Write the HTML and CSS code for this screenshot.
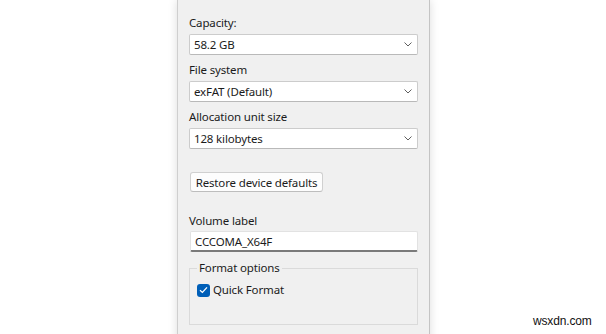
FILE: index.html
```html
<!DOCTYPE html>
<html>
<head>
  <title>Format USB Drive</title>
  <meta charset="UTF-8" />
  <meta name="viewport" content="width=device-width, initial-scale=1.0" />
  <link rel="stylesheet" href="styles.css">
</head>
<body>

  <div class="format-window">
    <div class="field">
      <label class="field-label">Capacity:</label>
      <div class="dropdown">
        <span>58.2 GB</span>
        <svg class="chevron" width="8" height="5" viewBox="0 0 8 5"><path d="M0.5 0.5 L4 4 L7.5 0.5" /></svg>
      </div>
    </div>

    <div class="field">
      <label class="field-label">File system</label>
      <div class="dropdown">
        <span>exFAT (Default)</span>
        <svg class="chevron" width="8" height="5" viewBox="0 0 8 5"><path d="M0.5 0.5 L4 4 L7.5 0.5" /></svg>
      </div>
    </div>

    <div class="field">
      <label class="field-label">Allocation unit size</label>
      <div class="dropdown">
        <span>128 kilobytes</span>
        <svg class="chevron" width="8" height="5" viewBox="0 0 8 5"><path d="M0.5 0.5 L4 4 L7.5 0.5" /></svg>
      </div>
    </div>

    <button class="restore-button">Restore device defaults</button>

    <label class="field-label volume-label" for="volume">Volume label</label>
    <input type="text" id="volume" class="volume-input" value="CCCOMA_X64F">

    <fieldset class="options-group">
      <legend>Format options</legend>
      <label class="check-row">
        <span class="checkbox">
          <svg width="9" height="8" viewBox="0 0 9 8"><path d="M1 4.2 L3.4 6.4 L8 1.4" /></svg>
        </span>
        Quick Format
      </label>
    </fieldset>
  </div>

  <div class="watermark">wsxdn.com</div>

</body>
</html>
```

FILE: styles.css
```css
body {
  margin: 0;
  height: 334px;
  overflow: hidden;
  background-color: #ffffff;
  display: flex;
  justify-content: center;
  font-family: "Noto Sans", "Open Sans", sans-serif;
  font-size: 11.5px;
  letter-spacing: -0.15px;
  color: #1b1b1b;
}

.format-window {
  width: 229px;
  height: 400px;
  padding: 15px 11px 0 11px;
  margin-left: 1px;
  background-color: #f0f0f0;
  border-left: 1px solid #cfcfcf;
  border-right: 1px solid #c4c4c4;
  box-shadow: 0 0 9px rgba(0, 0, 0, 0.14);
  display: flex;
  flex-direction: column;
}

.field {
  display: flex;
  flex-direction: column;
  margin-bottom: 7px;
}

.field-label {
  line-height: 16px;
  height: 16px;
  margin-bottom: 3px;
}

.dropdown {
  height: 19px;
  border: 1px solid #cccccc;
  border-bottom-color: #b9b9b9;
  border-radius: 2px;
  background-color: #ffffff;
  display: flex;
  align-items: center;
  justify-content: space-between;
  padding: 0 5px 0 4px;
  line-height: 19px;
}

.chevron path {
  fill: none;
  stroke: #5f5f5f;
  stroke-width: 1;
}

.restore-button {
  align-self: flex-start;
  margin: 16px 0 0 1px;
  height: 20px;
  width: 133px;
  padding: 0;
  font-family: inherit;
  font-size: 11.5px;
  letter-spacing: -0.15px;
  color: #1b1b1b;
  background-color: #fdfdfd;
  border: 1px solid #d0d0d0;
  border-bottom-color: #bdbdbd;
  border-radius: 3px;
}

.volume-label {
  margin-top: 21px;
  margin-bottom: 2px;
}

.volume-input {
  margin: 0 0 0 1px;
  padding: 0 4px;
  box-sizing: border-box;
  height: 21px;
  font-family: inherit;
  font-size: 11.5px;
  letter-spacing: -0.15px;
  color: #1b1b1b;
  background-color: #ffffff;
  border: 1px solid #e2e2e2;
  border-bottom: 2px solid #7a7a7a;
  border-radius: 2px;
  outline: none;
}

.options-group {
  margin: 8px 0 0 0;
  width: 229px;
  box-sizing: border-box;
  height: 65px;
  padding: 4px 7px 0 7px;
  border: 1px solid #dadada;
}

.options-group legend {
  padding: 0 2px;
  margin-left: 0;
  line-height: 16px;
}

.check-row {
  display: flex;
  align-items: center;
  gap: 3px;
  line-height: 16px;
  margin-top: 2px;
}

.checkbox {
  width: 13px;
  height: 13px;
  border-radius: 3px;
  background-color: #005fb8;
  display: flex;
  align-items: center;
  justify-content: center;
}

.checkbox path {
  fill: none;
  stroke: #ffffff;
  stroke-width: 1.3;
}

.watermark {
  position: absolute;
  left: 533px;
  top: 314px;
  font-family: "Liberation Sans", Arial, sans-serif;
  font-size: 12px;
  color: #111111;
}
```
